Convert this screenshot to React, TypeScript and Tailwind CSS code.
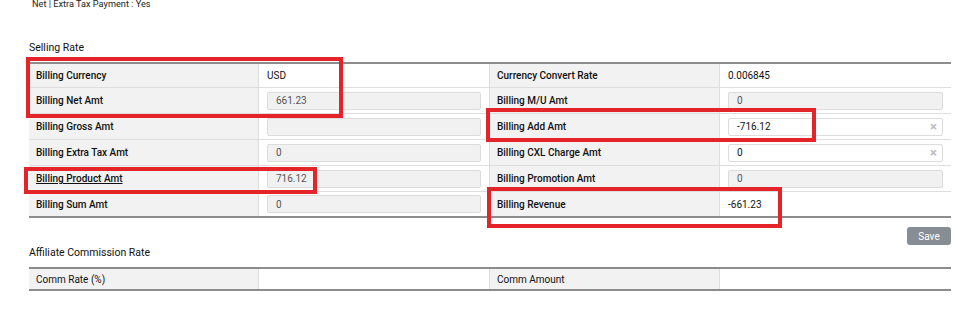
import React from "react";

const F = { fontFamily: "Roboto, 'Liberation Sans', Arial, sans-serif" };

function Label({ children, underline }: { children: React.ReactNode; underline?: boolean }) {
  return (
    <div className="flex items-center bg-[#f2f2f2] border-b border-r border-[#dedede] pl-[7px] text-[10px] font-medium text-[#111]">
      <span className={underline ? "underline underline-offset-1" : ""}>{children}</span>
    </div>
  );
}

function Cell({ children, last }: { children?: React.ReactNode; last?: boolean }) {
  return (
    <div className={"flex items-center bg-white border-b border-[#dedede] px-[8px] " + (last ? "" : "border-r")}>
      {children}
    </div>
  );
}

function Disabled({ v }: { v?: string }) {
  return (
    <div className="h-[18px] w-full bg-[#f1f1f1] border border-[#dcdcdc] rounded-[2px] flex items-center pl-[8px] text-[10px] text-[#555]">
      {v}
    </div>
  );
}

function Editable({ v }: { v: string }) {
  return (
    <div className="h-[18px] w-full bg-white border border-[#dcdcdc] rounded-[2px] flex items-center justify-between pl-[8px] pr-[5px] text-[10px] text-[#111]">
      <span>{v}</span>
      <span className="text-[#bbb] text-[13px] leading-none font-bold">×</span>
    </div>
  );
}

function Plain({ v }: { v: string }) {
  return <span className="text-[10px] text-[#111]">{v}</span>;
}

function RedBox({ cls }: { cls: string }) {
  return <div className={"absolute border-[4px] border-[#e5242a] pointer-events-none " + cls} />;
}

export default function App() {
  return (
    <div style={F} className="relative w-[958px] h-[310px] bg-white overflow-hidden">
      <div className="pl-[29px] pr-[7px]">
        <div className="pl-[3px] text-[9.2px] text-[#222] leading-[10px] -mt-[1px]">Net | Extra Tax Payment : Yes</div>
        <div className="mt-[32px] text-[10.5px] text-[#111] leading-[14px]">Selling Rate</div>
        <div className="mt-[7px] border-t-2 border-[#8c8c8c] border-b-2 border-b-[#8c8c8c] grid grid-cols-[230px_231px_230px_231px] grid-rows-[24px_26px_26px_26px_26px_24px]">
          <Label>Billing Currency</Label>
          <Cell><Plain v="USD" /></Cell>
          <Label>Currency Convert Rate</Label>
          <Cell last><Plain v="0.006845" /></Cell>

          <Label>Billing Net Amt</Label>
          <Cell><Disabled v="661.23" /></Cell>
          <Label>Billing M/U Amt</Label>
          <Cell last><Disabled v="0" /></Cell>

          <Label>Billing Gross Amt</Label>
          <Cell><Disabled /></Cell>
          <Label>Billing Add Amt</Label>
          <Cell last><Editable v="-716.12" /></Cell>

          <Label>Billing Extra Tax Amt</Label>
          <Cell><Disabled v="0" /></Cell>
          <Label>Billing CXL Charge Amt</Label>
          <Cell last><Editable v="0" /></Cell>

          <Label underline>Billing Product Amt</Label>
          <Cell><Disabled v="716.12" /></Cell>
          <Label>Billing Promotion Amt</Label>
          <Cell last><Disabled v="0" /></Cell>

          <div className="flex items-center bg-[#f2f2f2] border-r border-[#dedede] pl-[7px] text-[10px] font-medium text-[#111]">Billing Sum Amt</div>
          <div className="flex items-center bg-white border-r border-[#dedede] px-[8px]"><Disabled v="0" /></div>
          <div className="flex items-center bg-[#f2f2f2] border-r border-[#dedede] pl-[7px] text-[10px] font-medium text-[#111]">Billing Revenue</div>
          <div className="flex items-center bg-white px-[8px]"><Plain v="-661.23" /></div>
        </div>
        <div className="flex justify-end mt-[9px]">
          <button className="h-[18px] w-[44px] rounded-[3px] bg-[#878d94] text-white text-[10px] flex items-center justify-center">Save</button>
        </div>
        <div className="mt-[1px] text-[10.5px] text-[#111] leading-[14px]">Affiliate Commission Rate</div>
        <div className="mt-[7px] border-t-2 border-[#8c8c8c] border-b-2 border-b-[#8c8c8c] grid grid-cols-[230px_231px_230px_231px] grid-rows-[20px]">
          <div className="flex items-center bg-[#f2f2f2] border-r border-[#dedede] pl-[7px] text-[10px] text-[#111]">Comm Rate (%)</div>
          <div className="bg-white border-r border-[#dedede]" />
          <div className="flex items-center bg-[#f2f2f2] border-r border-[#dedede] pl-[7px] text-[10px] text-[#111]">Comm Amount</div>
          <div className="bg-white" />
        </div>
      </div>

      <RedBox cls="left-[26px] top-[57px] w-[317px] h-[61px]" />
      <RedBox cls="left-[24px] top-[167px] w-[293px] h-[27px]" />
      <RedBox cls="left-[486px] top-[108px] w-[330px] h-[34px]" />
      <RedBox cls="left-[487px] top-[187px] w-[295px] h-[41px]" />
    </div>
  );
}
